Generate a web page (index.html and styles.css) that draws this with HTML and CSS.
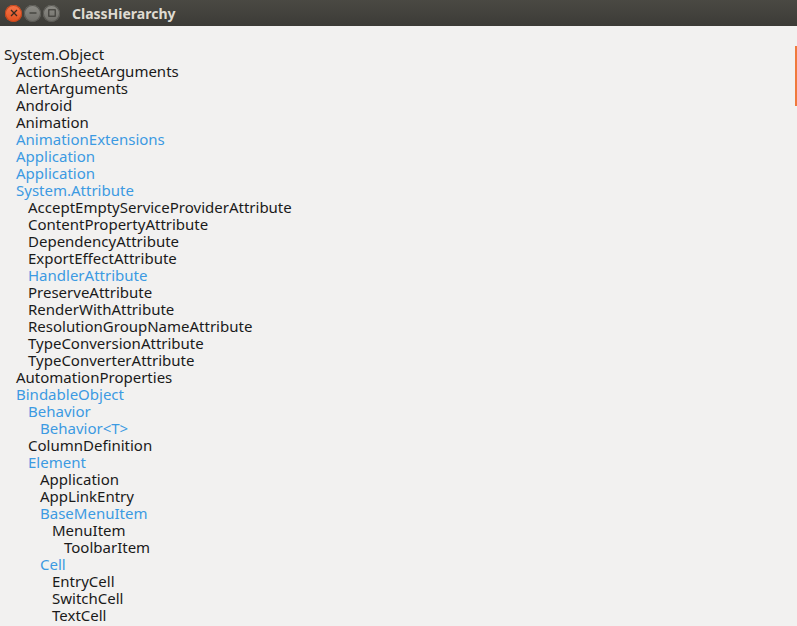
FILE: index.html
```html
<!DOCTYPE html>
<html>
<head>
<meta charset="utf-8">
<link rel="stylesheet" href="styles.css">
</head>
<body>
<div class="window">
  <header class="titlebar">
    <div class="controls">
      <span class="btn close"><svg width="8" height="8" viewBox="0 0 8 8"><path d="M1 1L7 7M7 1L1 7" stroke="#3a2a20" stroke-width="1.3"/></svg></span>
      <span class="btn"><svg width="8" height="8" viewBox="0 0 8 8"><path d="M0.5 4H7.5" stroke="#3a3935" stroke-width="1.2"/></svg></span>
      <span class="btn"><svg width="8" height="8" viewBox="0 0 8 8"><rect x="0.8" y="0.8" width="6.4" height="6.4" fill="none" stroke="#3a3935" stroke-width="1.1"/></svg></span>
    </div>
    <div class="title">ClassHierarchy</div>
  </header>
  <main class="content">
    <ul class="tree">
      <li class="l0">System.Object</li>
      <li class="l1">ActionSheetArguments</li>
      <li class="l1">AlertArguments</li>
      <li class="l1">Android</li>
      <li class="l1">Animation</li>
      <li class="l1 link">AnimationExtensions</li>
      <li class="l1 link">Application</li>
      <li class="l1 link">Application</li>
      <li class="l1 link">System.Attribute</li>
      <li class="l2">AcceptEmptyServiceProviderAttribute</li>
      <li class="l2">ContentPropertyAttribute</li>
      <li class="l2">DependencyAttribute</li>
      <li class="l2">ExportEffectAttribute</li>
      <li class="l2 link">HandlerAttribute</li>
      <li class="l2">PreserveAttribute</li>
      <li class="l2">RenderWithAttribute</li>
      <li class="l2">ResolutionGroupNameAttribute</li>
      <li class="l2">TypeConversionAttribute</li>
      <li class="l2">TypeConverterAttribute</li>
      <li class="l1">AutomationProperties</li>
      <li class="l1 link">BindableObject</li>
      <li class="l2 link">Behavior</li>
      <li class="l3 link">Behavior&lt;T&gt;</li>
      <li class="l2">ColumnDefinition</li>
      <li class="l2 link">Element</li>
      <li class="l3">Application</li>
      <li class="l3">AppLinkEntry</li>
      <li class="l3 link">BaseMenuItem</li>
      <li class="l4">MenuItem</li>
      <li class="l5">ToolbarItem</li>
      <li class="l3 link">Cell</li>
      <li class="l4">EntryCell</li>
      <li class="l4">SwitchCell</li>
      <li class="l4">TextCell</li>
    </ul>
    <div class="scroll-indicator"></div>
  </main>
</div>
</body>
</html>
```

FILE: styles.css
```css
html, body {
  margin: 0;
  padding: 0;
  height: 100%;
  overflow: hidden;
  background: #f2f1f0;
}
.window {
  display: flex;
  flex-direction: column;
  height: 626px;
  font-family: "Noto Sans", "DejaVu Sans", sans-serif;
}
.titlebar {
  height: 26px;
  flex: none;
  background: linear-gradient(#4a4943, #3c3b37);
  display: flex;
  align-items: center;
  padding-left: 5px;
}
.controls {
  display: flex;
  gap: 2px;
}
.btn {
  width: 17px;
  height: 17px;
  border-radius: 50%;
  background: linear-gradient(#8e8d87, #6f6e69);
  display: flex;
  align-items: center;
  justify-content: center;
  box-shadow: inset 0 0 0 1px #5a5954;
}
.btn.close {
  background: linear-gradient(#f6764a, #e2501f);
  box-shadow: inset 0 0 0 1px #c2461c;
}
.title {
  margin-left: 12px;
  color: #dfdbd2;
  font-weight: bold;
  font-size: 14px;
}
.content {
  position: relative;
  flex: 1;
  overflow: hidden;
}
.tree {
  list-style: none;
  margin: 0;
  padding: 20px 0 0 4px;
  font-size: 15px;
  line-height: 17px;
  color: #1a1a1a;
}
.tree li { white-space: nowrap; height: 17px; }
.tree .link { color: #3c9ae2; }
.l1 { padding-left: 12px; }
.l2 { padding-left: 24px; }
.l3 { padding-left: 36px; }
.l4 { padding-left: 48px; }
.l5 { padding-left: 60px; }
.scroll-indicator {
  position: absolute;
  right: 0;
  top: 20px;
  width: 2px;
  height: 60px;
  background: #f07a3c;
}
```
